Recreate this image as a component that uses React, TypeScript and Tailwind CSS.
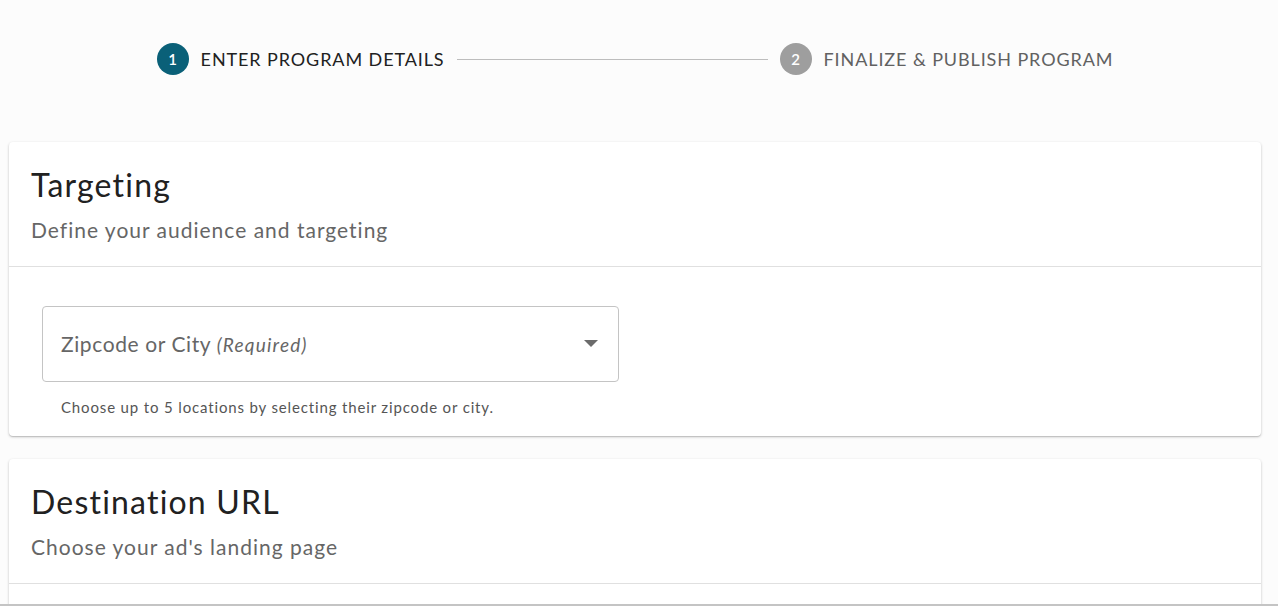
import React from "react";

const font = { fontFamily: "Lato, 'Open Sans', sans-serif" };

const Step = ({ n, label, active }: { n: number; label: string; active?: boolean }) => (
    <div className="flex items-center">
        <div
            className={`flex h-8 w-8 items-center justify-center rounded-full text-[15px] font-semibold text-white ${
                active ? "bg-[#0a6078]" : "bg-[#9e9e9e]"
            }`}
        >
            {n}
        </div>
        <span
            className={`ml-3 text-[18px] tracking-[0.9px] uppercase ${
                active ? "text-[#212121]" : "text-[#616161]"
            }`}
        >
            {label}
        </span>
    </div>
);

const Card = ({ title, subtitle, children }: { title: string; subtitle: string; children?: React.ReactNode }) => (
    <div className="rounded bg-white shadow-[0_1px_3px_rgba(0,0,0,0.2),0_1px_1px_rgba(0,0,0,0.12)]">
        <div className="px-[22px] pt-[21px] pb-[23px]">
            <h2 className="text-[32px] leading-[44px] tracking-[1.2px] text-[#212121]">{title}</h2>
            <p className="mt-[10px] text-[21px] leading-[26px] tracking-[1px] text-[#666666]">{subtitle}</p>
        </div>
        <div className="h-px bg-[#e0e0e0]" />
        {children}
    </div>
);

export default function App() {
    return (
        <div style={font} className="flex h-[606px] flex-col overflow-hidden border-b-2 border-[#c4c4c4] bg-[#fcfcfc]">
            {/* Stepper */}
            <div className="flex items-center justify-center pt-[43px] pb-[67px] pr-[8px]">
                <Step n={1} label="Enter program details" active />
                <div className="mx-3 h-px w-[311px] bg-[#bdbdbd]" />
                <Step n={2} label="Finalize & publish program" />
            </div>

            <div className="ml-[9px] mr-[17px] flex flex-col gap-[23px]">
                <Card title="Targeting" subtitle="Define your audience and targeting">
                    <div className="px-[33px] pt-[39px] pb-[17px]">
                        <div className="flex h-[76px] w-[577px] items-center justify-between rounded border border-[#c4c4c4] pl-[18px] pr-[20px]">
                            <span className="text-[21px] tracking-[0.6px] text-[#666666]">
                                Zipcode or City <i className="text-[19px] tracking-[1.2px]">(Required)</i>
                            </span>
                            <svg width="14" height="8" viewBox="0 0 14 8">
                                <path d="M0 0 L14 0 L7 7 Z" fill="#6b6b6b" />
                            </svg>
                        </div>
                        <p className="mt-[14px] pl-[19px] text-[15px] tracking-[0.85px] text-[#555555]">
                            Choose up to 5 locations by selecting their zipcode or city.
                        </p>
                    </div>
                </Card>

                <Card title="Destination URL" subtitle="Choose your ad's landing page">
                    <div className="h-[80px]" />
                </Card>
            </div>
        </div>
    );
}
